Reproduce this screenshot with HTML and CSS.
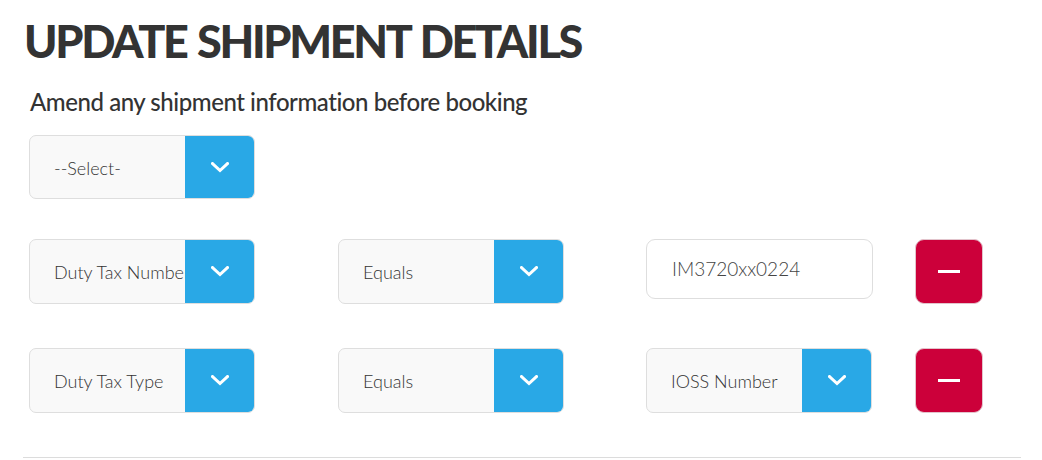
FILE: index.html
```html
<!DOCTYPE html>
<html lang="en">
<head>
<meta charset="utf-8">
<title>Update Shipment Details</title>
<link rel="stylesheet" href="styles.css">
</head>
<body>
<div class="page">
  <h1 class="title">UPDATE SHIPMENT DETAILS</h1>
  <h2 class="subtitle">Amend any shipment information before booking</h2>

  <div class="row row-first">
    <div class="select"><span class="select-text">--Select-</span><span class="select-btn"><svg width="18" height="11" viewBox="0 0 18 11"><polyline points="1.5,1.5 9,8.5 16.5,1.5" fill="none" stroke="#fff" stroke-width="3" stroke-linecap="square"/></svg></span></div>
  </div>

  <div class="row row-second">
    <div class="select"><span class="select-text">Duty Tax Number</span><span class="select-btn"><svg width="18" height="11" viewBox="0 0 18 11"><polyline points="1.5,1.5 9,8.5 16.5,1.5" fill="none" stroke="#fff" stroke-width="3" stroke-linecap="square"/></svg></span></div>
    <div class="select"><span class="select-text">Equals</span><span class="select-btn"><svg width="18" height="11" viewBox="0 0 18 11"><polyline points="1.5,1.5 9,8.5 16.5,1.5" fill="none" stroke="#fff" stroke-width="3" stroke-linecap="square"/></svg></span></div>
    <div class="text-input">IM3720xx0224</div>
    <button class="remove" type="button"><span class="minus"></span></button>
  </div>

  <div class="row row-third">
    <div class="select"><span class="select-text">Duty Tax Type</span><span class="select-btn"><svg width="18" height="11" viewBox="0 0 18 11"><polyline points="1.5,1.5 9,8.5 16.5,1.5" fill="none" stroke="#fff" stroke-width="3" stroke-linecap="square"/></svg></span></div>
    <div class="select"><span class="select-text">Equals</span><span class="select-btn"><svg width="18" height="11" viewBox="0 0 18 11"><polyline points="1.5,1.5 9,8.5 16.5,1.5" fill="none" stroke="#fff" stroke-width="3" stroke-linecap="square"/></svg></span></div>
    <div class="select"><span class="select-text">IOSS Number</span><span class="select-btn"><svg width="18" height="11" viewBox="0 0 18 11"><polyline points="1.5,1.5 9,8.5 16.5,1.5" fill="none" stroke="#fff" stroke-width="3" stroke-linecap="square"/></svg></span></div>
    <button class="remove" type="button"><span class="minus"></span></button>
  </div>

  <div class="divider"></div>
</div>
</body>
</html>
```
FILE: styles.css
```css
* { box-sizing: border-box; }
html, body { margin: 0; padding: 0; background: #fff; }
body {
  font-family: "Lato", "Open Sans", "DejaVu Sans", sans-serif;
  color: #333;
}
.page {
  padding: 16px 21px 0 23px;
  width: 1042px;
  height: 460px;
  overflow: hidden;
}
.title {
  margin: 0 0 0 1px;
  font-size: 45px;
  line-height: 50px;
  font-weight: 900;
  color: #333;
  letter-spacing: -2.3px;
  word-spacing: 2px;
}
.subtitle {
  margin: 22px 0 0 7px;
  font-size: 24px;
  line-height: 28px;
  font-weight: 500;
  color: #333;
  letter-spacing: -0.45px;
}
.row {
  display: grid;
  grid-template-columns: 309px 308px 269px 68px;
  padding-left: 6px;
  align-items: start;
}
.row-first { margin-top: 19px; }
.row-second { margin-top: 40px; }
.row-third { margin-top: 44px; }
.select {
  width: 226px;
  height: 64px;
  display: flex;
  background: #f9f9f9;
  border: 1px solid #dedede;
  border-radius: 7px;
  overflow: hidden;
}
.row-second .select, .row-third .select { height: 65px; }
.select-text {
  flex: 1;
  min-width: 0;
  white-space: nowrap;
  overflow: hidden;
  padding-left: 24px;
  font-size: 18px;
  font-weight: 300;
  line-height: 64px;
  color: #333;
}
.select-btn {
  flex: 0 0 70px;
  margin: -1px -1px -1px 0;
  background: #29a8e6;
  display: flex;
  align-items: center;
  justify-content: center;
}
.text-input {
  width: 227px;
  height: 60px;
  background: #fff;
  border: 1px solid #dedede;
  border-radius: 9px;
  padding-left: 25px;
  font-size: 19px;
  font-weight: 300;
  line-height: 58px;
  color: #444;
}
.remove {
  width: 68px;
  height: 65px;
  margin: 0;
  padding: 0;
  border: 1px solid #e2c4cc;
  border-radius: 9px;
  background: #cc003a;
  display: flex;
  align-items: center;
  justify-content: center;
}
.minus {
  display: block;
  width: 22px;
  height: 3px;
  background: #fff;
}
.divider {
  margin-top: 44px;
  border-top: 1px solid #dcdcdc;
  width: 998px;
}
```
